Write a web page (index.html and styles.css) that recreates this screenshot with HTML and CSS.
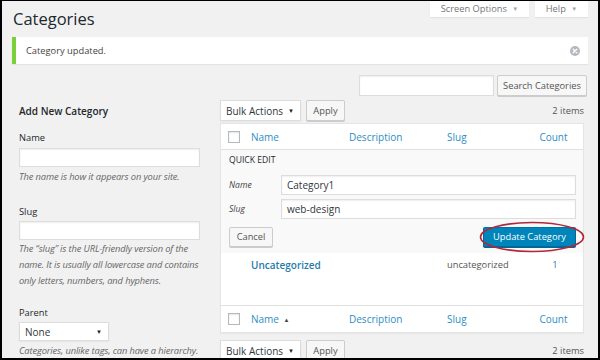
FILE: index.html
```html
<!DOCTYPE html>
<html>
<head>
<meta charset="utf-8">
<link rel="stylesheet" href="styles.css">
</head>
<body>
<div class="page">
  <div class="header">
    <h1 class="title">Categories</h1>
    <div class="tabs">
      <div class="tab tab-screen">Screen Options <span class="caret">▼</span></div>
      <div class="tab tab-help">Help <span class="caret">▼</span></div>
    </div>
  </div>

  <div class="notice">
    <span>Category updated.</span>
    <svg class="dismiss" width="10" height="10" viewBox="0 0 10 10">
      <circle cx="5" cy="5" r="5" fill="#b4b9be"/>
      <path d="M3.2 3.2 L6.8 6.8 M6.8 3.2 L3.2 6.8" stroke="#fff" stroke-width="1.3" stroke-linecap="round"/>
    </svg>
  </div>

  <div class="search-row">
    <div class="input search-input"></div>
    <div class="btn search-btn">Search Categories</div>
  </div>

  <div class="cols">
    <div class="col-left">
      <h2 class="add-title">Add New Category</h2>
      <div class="field-label">Name</div>
      <div class="input field-input"></div>
      <p class="desc">The name is how it appears on your site.</p>

      <div class="field-label label-slug">Slug</div>
      <div class="input field-input"></div>
      <p class="desc desc-slug">The “slug” is the URL-friendly version of the name. It is usually all lowercase and contains only letters, numbers, and hyphens.</p>

      <div class="field-label label-parent">Parent</div>
      <div class="select parent-select"><span>None</span><span class="sel-caret">▼</span></div>
      <p class="desc desc-parent">Categories, unlike tags, can have a hierarchy.</p>
    </div>

    <div class="col-right">
      <div class="bulk-row">
        <div class="select bulk-select"><span>Bulk Actions</span><span class="sel-caret">▼</span></div>
        <div class="btn apply-btn">Apply</div>
        <div class="items">2 items</div>
      </div>

      <div class="table">
        <div class="row head-row">
          <div class="cb-cell"><span class="checkbox"></span></div>
          <div class="th">Name</div>
          <div class="th">Description</div>
          <div class="th">Slug</div>
          <div class="th th-count">Count</div>
        </div>

        <div class="quick-edit">
          <div class="qe-title">QUICK EDIT</div>
          <div class="qe-field qe-first">
            <span class="qe-label">Name</span>
            <div class="input qe-input">Category1</div>
          </div>
          <div class="qe-field">
            <span class="qe-label">Slug</span>
            <div class="input qe-input">web-design</div>
          </div>
          <div class="qe-actions">
            <div class="btn cancel-btn">Cancel</div>
            <div class="update-wrap">
              <div class="btn btn-primary">Update Category</div>
              <svg class="ring" width="106" height="32" viewBox="0 0 106 32">
                <ellipse cx="53" cy="16" rx="51.5" ry="14.5" fill="none" stroke="#b0283a" stroke-width="1.6"/>
              </svg>
            </div>
          </div>
        </div>

        <div class="row data-row">
          <div class="cb-cell"></div>
          <div class="td-title">Uncategorized</div>
          <div class="td"></div>
          <div class="td">uncategorized</div>
          <div class="td-count">1</div>
        </div>

        <div class="row foot-row">
          <div class="cb-cell"><span class="checkbox"></span></div>
          <div class="th">Name <span class="sort">▲</span></div>
          <div class="th">Description</div>
          <div class="th">Slug</div>
          <div class="th th-count">Count</div>
        </div>
      </div>

      <div class="bulk-row bulk-bottom">
        <div class="select bulk-select"><span>Bulk Actions</span><span class="sel-caret">▼</span></div>
        <div class="btn apply-btn">Apply</div>
        <div class="items">2 items</div>
      </div>
    </div>
  </div>
</div>
</body>
</html>
```

FILE: styles.css
```css
html, body {
  margin: 0;
  padding: 0;
}

body {
  width: 600px;
  height: 360px;
  overflow: hidden;
}

.page {
  width: 600px;
  height: 360px;
  box-sizing: border-box;
  border: 2px solid #000;
  border-top-width: 1px;
  background: #f1f1f1;
  overflow: hidden;
  font-family: "Open Sans", "Liberation Sans", sans-serif;
  font-size: 9.3px;
  color: #444;
}

/* header */
.header {
  display: flex;
  justify-content: space-between;
  align-items: flex-start;
  padding: 0 10px;
  height: 36px;
}

.title {
  margin: 6px 0 0 1px;
  font-size: 16.5px;
  line-height: 24px;
  font-weight: 400;
  color: #23282d;
}

.tabs {
  display: flex;
  gap: 6px;
}

.tab {
  height: 16px;
  line-height: 15px;
  background: #fff;
  color: #72777c;
  text-align: center;
  box-shadow: 0 1px 1px rgba(0, 0, 0, 0.06);
  box-sizing: border-box;
}

.tab-screen {
  width: 99px;
}

.tab-help {
  width: 53px;
}

.caret {
  font-size: 6px;
  color: #a0a5aa;
  margin-left: 3px;
  vertical-align: 1px;
}

/* notice */
.notice {
  margin: 0 10px;
  height: 27px;
  background: #fff;
  border-left: 4px solid #7ad03a;
  box-shadow: 0 1px 1px rgba(0, 0, 0, 0.05);
  display: flex;
  align-items: center;
  justify-content: space-between;
  padding: 0 8px 0 10px;
  box-sizing: border-box;
}

.dismiss {
  display: block;
}

/* search */
.search-row {
  display: flex;
  justify-content: flex-end;
  gap: 3px;
  margin-top: 11px;
  padding-right: 11px;
}

.input {
  background: #fff;
  border: 1px solid #ddd;
  box-shadow: inset 0 1px 2px rgba(0, 0, 0, 0.07);
  box-sizing: border-box;
  color: #32373c;
}

.search-input {
  width: 135px;
  height: 21px;
}

.btn {
  height: 21px;
  line-height: 19px;
  padding: 0 6px;
  background: #f7f7f7;
  border: 1px solid #ccc;
  border-radius: 2px;
  box-shadow: 0 1px 0 #ccc;
  color: #555;
  box-sizing: border-box;
  white-space: nowrap;
}

.search-btn {
  width: 90px;
  text-align: center;
  padding: 0;
}

/* columns */
.cols {
  display: flex;
  gap: 20px;
  margin-top: 4px;
  padding-left: 17px;
}

.col-left {
  width: 181px;
}

.add-title {
  margin: 1px 0 0;
  font-size: 10px;
  line-height: 20px;
  font-weight: 600;
  color: #23282d;
}

.field-label {
  margin-top: 10px;
  line-height: 14px;
  color: #23282d;
}

.label-slug {
  margin-top: 20px;
}

.label-parent {
  margin-top: 17px;
}

.field-input {
  margin-top: 3px;
  height: 19px;
}

.label-slug + .field-input {
  margin-top: 2px;
}

.desc {
  margin: 2px 0 0;
  font-style: italic;
  line-height: 16px;
  color: #666;
  letter-spacing: -0.12px;
}

.desc-slug {
  margin-top: 1px;
}

.select {
  display: flex;
  align-items: center;
  justify-content: space-between;
  background: #fff;
  border: 1px solid #ddd;
  box-shadow: 0 1px 2px rgba(0, 0, 0, 0.05);
  box-sizing: border-box;
  font-size: 10px;
  color: #32373c;
  padding: 0 6px 0 5px;
}

.sel-caret {
  font-size: 6px;
  color: #222;
}

.parent-select {
  margin-top: 2px;
  width: 90px;
  height: 19px;
}

/* right column */
.col-right {
  width: 364px;
}

.bulk-row {
  display: flex;
  align-items: center;
  gap: 5px;
  height: 21px;
}

.bulk-select {
  width: 81px;
  height: 21px;
}

.apply-btn {
  width: 39px;
  text-align: center;
  padding: 0;
}

.items {
  margin-left: auto;
  color: #555;
}

.table {
  margin-top: 2px;
  background: #fff;
  border: 1px solid #e5e5e5;
  box-shadow: 0 1px 1px rgba(0, 0, 0, 0.04);
  box-sizing: border-box;
}

.row {
  display: grid;
  grid-template-columns: 30px 98px 98px 77px 1fr;
  align-items: center;
}

.head-row {
  height: 25px;
  border-bottom: 1px solid #e1e1e1;
}

.foot-row {
  height: 26px;
  border-top: 1px solid #e1e1e1;
}

.cb-cell {
  display: flex;
  padding-left: 7px;
}

.checkbox {
  width: 12px;
  height: 12px;
  border: 1px solid #b4b9be;
  background: #fff;
  box-sizing: border-box;
  box-shadow: inset 0 1px 2px rgba(0, 0, 0, 0.1);
}

.th {
  font-size: 10px;
  color: #2e8ec2;
}

.th-count {
  text-align: center;
}

.sort {
  font-size: 6px;
  color: #444;
  vertical-align: 1px;
  margin-left: 2px;
}

/* quick edit */
.quick-edit {
  background: #f9f9f9;
  padding: 3px 7px 6px 8px;
  height: 103px;
  box-sizing: border-box;
}

.qe-title {
  line-height: 14px;
  font-size: 8.6px;
  color: #23282d;
}

.qe-field {
  display: flex;
  align-items: center;
  margin-top: 4px;
}

.qe-first {
  margin-top: 8px;
}

.qe-label {
  width: 52px;
  font-style: italic;
  font-size: 8.6px;
  color: #444;
}

.qe-input {
  flex: 1;
  height: 20px;
  line-height: 18px;
  padding-left: 5px;
  font-size: 10px;
}

.qe-actions {
  display: flex;
  justify-content: space-between;
  align-items: center;
  margin-top: 8px;
}

.cancel-btn {
  height: 20px;
  line-height: 18px;
  width: 44px;
  text-align: center;
  padding: 0;
}

.update-wrap {
  position: relative;
}

.btn-primary {
  height: 20px;
  line-height: 18px;
  width: 93px;
  padding: 0;
  text-align: center;
  background: #0085ba;
  border-color: #0073aa #006799 #006799;
  box-shadow: 0 1px 0 #006799;
  color: #fff;
}

.ring {
  position: absolute;
  left: -4px;
  top: -6px;
  pointer-events: none;
}

/* data row */
.data-row {
  height: 52px;
  align-items: start;
  padding-top: 5px;
  box-sizing: border-box;
  line-height: 14px;
}

.td-title {
  font-size: 10px;
  font-weight: 600;
  color: #1f7cab;
}

.td {
  color: #555;
}

.td-count {
  text-align: center;
  color: #1f7cab;
  padding-left: 3px;
}

.bulk-bottom {
  margin-top: 7px;
}
```
